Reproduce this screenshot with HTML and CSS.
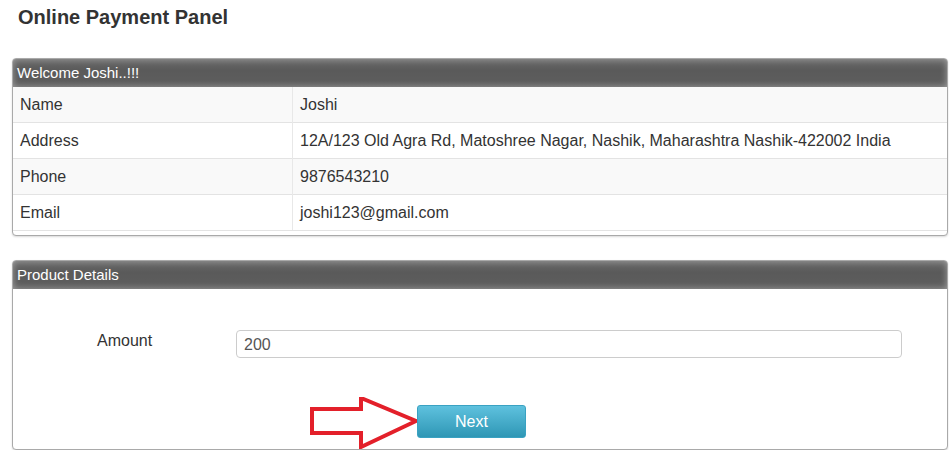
FILE: index.html
```html
<!DOCTYPE html>
<html>
<head>
<meta charset="utf-8">
<link rel="stylesheet" href="styles.css">
</head>
<body>
<h1 class="title">Online Payment Panel</h1>

<div class="panel panel-welcome">
  <div class="panel-head">Welcome Joshi..!!!</div>
  <table class="info">
    <tr class="odd"><td class="k">Name</td><td class="v">Joshi</td></tr>
    <tr><td class="k">Address</td><td class="v">12A/123 Old Agra Rd, Matoshree Nagar, Nashik, Maharashtra Nashik-422002 India</td></tr>
    <tr class="odd"><td class="k">Phone</td><td class="v">9876543210</td></tr>
    <tr><td class="k">Email</td><td class="v">joshi123@gmail.com</td></tr>
  </table>
</div>

<div class="panel panel-product">
  <div class="panel-head">Product Details</div>
  <div class="product-body">
    <div class="form-row">
      <label class="form-label">Amount</label>
      <div class="form-input">200</div>
    </div>
    <div class="action-row">
      <svg class="arrow" width="110" height="54" viewBox="0 0 110 54">
        <polygon points="2,12 51,12 51,1 106,24 51,50 51,36 2,36" fill="#ffffff" stroke="#e3202a" stroke-width="4" stroke-linejoin="miter"/>
      </svg>
      <button class="btn-next">Next</button>
    </div>
  </div>
</div>
</body>
</html>
```

FILE: styles.css
```css
html, body {
  margin: 0;
  padding: 0;
  background: #ffffff;
  font-family: "Liberation Sans", Arial, sans-serif;
  color: #333333;
}

.title {
  margin: 0 0 29px 0;
  padding: 6px 0 0 18px;
  font-size: 20px;
  line-height: 23px;
  font-weight: bold;
  color: #333333;
}

.panel {
  margin: 0 1px 0 12px;
  border: 1px solid #a9a9a9;
  border-radius: 4px;
  background: #ffffff;
  box-shadow: 0 1px 2px rgba(0,0,0,0.15);
  overflow: hidden;
}

.panel-head {
  height: 28px;
  line-height: 28px;
  padding-left: 4px;
  font-size: 15px;
  color: #ffffff;
  background: linear-gradient(#6a6a6a, #5a5a5a 40%, #5e5e5e);
  box-shadow: inset 0 0 7px rgba(170,170,170,0.9);
}

.panel-welcome {
  padding-bottom: 4px;
}

.info {
  width: 100%;
  border-collapse: collapse;
  font-size: 16px;
}

.info td {
  padding: 8px 7px;
  line-height: 19px;
  color: #333333;
}

.info tr + tr td {
  border-top: 1px solid #e3e3e3;
}

.info tr.odd td {
  background: #f9f9f9;
}

.info td.k {
  width: 265px;
  border-right: 1px solid #e8e8e8;
}

.info tr:last-child td {
  border-bottom: 1px solid #e3e3e3;
}

.panel-product {
  margin-top: 24px;
}

.product-body {
  padding: 41px 0 11px 0;
}

.form-row {
  display: grid;
  grid-template-columns: 223px 666px;
  align-items: start;
}

.form-label {
  padding: 1px 0 0 84px;
  font-size: 16px;
  line-height: 20px;
  color: #333333;
}

.form-input {
  box-sizing: border-box;
  height: 28px;
  border: 1px solid #cccccc;
  border-radius: 4px;
  padding: 0 7px;
  font-size: 16px;
  line-height: 28px;
  color: #555555;
  background: #ffffff;
}

.action-row {
  position: relative;
  margin-top: 47px;
  padding-left: 404px;
}

.arrow {
  position: absolute;
  left: 297px;
  top: -8px;
}

.btn-next {
  position: relative;
  box-sizing: border-box;
  width: 109px;
  height: 33px;
  border: 1px solid #3aa2c2;
  border-radius: 3px;
  background: linear-gradient(#5ec1de, #2f97b5);
  color: #ffffff;
  font-family: "Liberation Sans", Arial, sans-serif;
  font-size: 16px;
  padding: 0;
  display: block;
}
```
